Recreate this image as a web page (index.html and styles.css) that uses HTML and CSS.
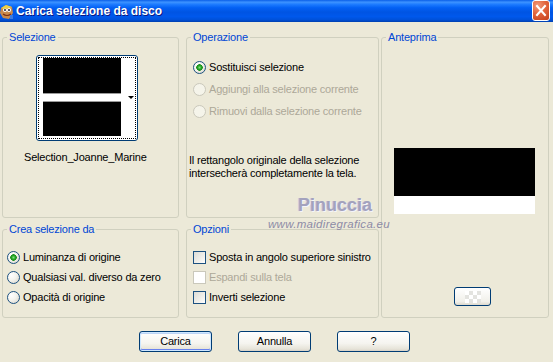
FILE: index.html
```html
<!DOCTYPE html>
<html lang="it">
<head>
    <meta charset="UTF-8">
    <title>Carica selezione da disco</title>
    <link rel="stylesheet" href="styles.css">
</head>
<body>
    <div class="titlebar">
        <svg class="app-icon" width="14" height="16" viewBox="0 0 14 16">
            <path d="M1 4 L6 1 L12 3 L13 9 L9 15 L3 14 L0 9 Z" fill="#c98a4b"/>
            <circle cx="5" cy="6" r="2" fill="#fff"/>
            <circle cx="9" cy="6" r="2" fill="#fff"/>
            <circle cx="5" cy="6" r="1" fill="#223"/>
            <circle cx="9" cy="6" r="1" fill="#223"/>
            <path d="M3 10 Q7 13 11 10" stroke="#7a2d12" stroke-width="1.2" fill="none"/>
            <path d="M1 4 L6 1 L12 3 L9 4 L4 5 Z" fill="#e9d04b"/>
            <rect x="10" y="11" width="3" height="4" fill="#3b7be0"/>
        </svg>
        <span class="title-text">Carica selezione da disco</span>
        <span class="close-btn">
            <svg width="16" height="19" viewBox="0 0 16 19">
                <path d="M4 5 L12 14 M12 5 L4 14" stroke="#fff" stroke-width="2" stroke-linecap="square"/>
            </svg>
        </span>
    </div>

    <div class="panels">
        <fieldset class="group group-sel">
            <legend>Selezione</legend>
            <div class="sel-body">
                <div class="thumb-btn">
                    <div class="thumb-focus">
                        <div class="thumb-img">
                            <div class="blk blk-top"></div>
                            <div class="band"></div>
                            <div class="blk blk-bot"></div>
                        </div>
                        <span class="thumb-arrow"></span>
                    </div>
                </div>
                <div class="sel-name">Selection_Joanne_Marine</div>
            </div>
        </fieldset>

        <fieldset class="group group-op">
            <legend>Operazione</legend>
            <div class="opt-list op-list">
                <div class="opt-row"><span class="radio checked"></span>Sostituisci selezione</div>
                <div class="opt-row disabled"><span class="radio"></span>Aggiungi alla selezione corrente</div>
                <div class="opt-row disabled"><span class="radio"></span>Rimuovi dalla selezione corrente</div>
            </div>
            <p class="op-note">Il rettangolo originale della selezione<br>intersecherà completamente la tela.</p>
        </fieldset>

        <fieldset class="group group-preview">
            <legend>Anteprima</legend>
            <div class="preview">
                <div class="preview-black"></div>
                <div class="preview-white"></div>
            </div>
            <span class="bg-btn"><span class="checker"></span></span>
        </fieldset>

        <fieldset class="group group-src">
            <legend>Crea selezione da</legend>
            <div class="opt-list src-list">
                <div class="opt-row"><span class="radio checked"></span>Luminanza di origine</div>
                <div class="opt-row"><span class="radio"></span>Qualsiasi val. diverso da zero</div>
                <div class="opt-row"><span class="radio"></span>Opacità di origine</div>
            </div>
        </fieldset>

        <fieldset class="group group-opt">
            <legend>Opzioni</legend>
            <div class="opt-list chk-list">
                <div class="opt-row"><span class="check"></span>Sposta in angolo superiore sinistro</div>
                <div class="opt-row disabled"><span class="check"></span>Espandi sulla tela</div>
                <div class="opt-row"><span class="check"></span>Inverti selezione</div>
            </div>
        </fieldset>
    </div>

    <div class="actions">
        <button class="btn btn-default">Carica</button>
        <button class="btn">Annulla</button>
        <button class="btn">?</button>
    </div>

    <div class="watermark">
        <span class="wm-name">Pinuccia</span>
        <span class="wm-site">www.maidiregrafica.eu</span>
    </div>
</body>
</html>
```

FILE: styles.css
```css
* {
    box-sizing: border-box;
}

body {
    margin: 0;
    width: 553px;
    height: 362px;
    overflow: hidden;
    position: relative;
    background-color: #ece9d8;
    font-family: 'Liberation Sans', Arial, sans-serif;
    font-size: 11px;
    line-height: 13px;
    letter-spacing: -0.2px;
    color: #000;
}

/* Title bar */
.titlebar {
    height: 22px;
    display: flex;
    align-items: center;
    background: linear-gradient(to bottom, #0a5fe8 0%, #3d93ff 10%, #1d7bff 20%, #0361f4 35%, #0054e3 55%, #0058ec 75%, #0050d8 90%, #003fae 100%);
}

.app-icon {
    flex: none;
    margin: 1px 0 0 0;
}

.title-text {
    margin-left: 2px;
    color: #fff;
    font-weight: bold;
    font-size: 12px;
    letter-spacing: 0;
    text-shadow: 1px 1px 0 #0a1883;
}

.close-btn {
    margin-left: auto;
    margin-right: 3px;
    align-self: flex-start;
    width: 18px;
    height: 21px;
    display: flex;
    align-items: center;
    justify-content: center;
    border: 1px solid #fff;
    border-radius: 3px;
    background: radial-gradient(circle at 30% 25%, #f09a7c 0%, #e2643c 45%, #c4401b 100%);
}

/* Group boxes */
.panels {
    display: grid;
    grid-template-columns: 184px 195px 168px;
    grid-template-rows: 187px 95px;
    row-gap: 5px;
    padding: 9px 0 0 2px;
}

.group {
    margin: 0;
    padding: 0;
    min-width: 0;
    border: 1px solid #d0d0bf;
    border-radius: 3px;
}

.group legend {
    margin-left: 4px;
    padding: 0 2px;
    color: #0046d5;
    line-height: 13px;
}

.group-sel,
.group-src {
    width: 177px;
}

.group-op,
.group-opt {
    width: 193px;
}

.group-preview {
    grid-column: 3;
    grid-row: 1 / span 2;
}

/* Selezione */
.sel-body {
    display: inline-flex;
    flex-direction: column;
    align-items: center;
    margin: 11px 0 0 21px;
}

.thumb-btn {
    width: 102px;
    height: 86px;
    margin-left: 3px;
    padding: 1px;
    display: flex;
    border: 1px solid #003c74;
    border-radius: 3px;
    background: #fff;
}

.thumb-focus {
    flex: 1;
    display: flex;
    padding-left: 4px;
    border: 1px dotted #000;
}

.thumb-img {
    width: 78px;
    display: flex;
    flex-direction: column;
}

.blk {
    background: #000;
}

.blk-top {
    height: 35px;
}

.blk-bot {
    height: 34px;
}

.band {
    height: 9px;
    border-top: 1px solid #9a9a9a;
    border-bottom: 1px solid #9a9a9a;
    background: #fff;
}

.thumb-arrow {
    margin: 38px 1px 0 auto;
    width: 0;
    height: 0;
    border-left: 3px solid transparent;
    border-right: 3px solid transparent;
    border-top: 3px solid #000;
}

.sel-name {
    margin-top: 10px;
}

/* Radio and check lists */
.opt-list {
    display: flex;
    flex-direction: column;
}

.op-list {
    padding: 12px 0 0 6px;
}

.op-list .opt-row {
    height: 22px;
}

.src-list {
    padding: 11px 0 0 4px;
}

.chk-list {
    padding: 11px 0 0 6px;
}

.src-list .opt-row,
.chk-list .opt-row {
    height: 20px;
}

.opt-row {
    display: flex;
    align-items: center;
    gap: 3px;
    white-space: nowrap;
}

.opt-row.disabled {
    color: #aca899;
}

.radio {
    flex: none;
    width: 13px;
    height: 13px;
    border-radius: 50%;
    border: 1px solid #1c5180;
    background: radial-gradient(circle at 30% 30%, #ffffff 0%, #f4f3ee 45%, #d6d3c6 100%);
}

.radio.checked {
    background: radial-gradient(circle at 50% 50%, #7ee07e 0px, #21a121 2px, #1e8f1e 3px, transparent 3.5px),
                radial-gradient(circle at 30% 30%, #ffffff 0%, #f4f3ee 45%, #d6d3c6 100%);
}

.disabled .radio {
    border-color: #cac8bb;
    background: #f5f4ea;
}

.check {
    flex: none;
    width: 13px;
    height: 13px;
    border: 1px solid #1c5180;
    background: linear-gradient(135deg, #dcdcd7 0%, #f0efea 60%, #ffffff 100%);
}

.disabled .check {
    border-color: #cac8bb;
    background: #fff;
}

.op-note {
    margin: 32px 0 0 2px;
}

/* Anteprima */
.preview {
    width: 141px;
    margin: 104px 0 0 12px;
}

.preview-black {
    height: 48px;
    background: #000;
}

.preview-white {
    height: 18px;
    background: #fff;
}

.bg-btn {
    margin: 73px 0 0 72px;
    width: 37px;
    height: 19px;
    display: flex;
    align-items: center;
    justify-content: center;
    border: 1px solid #003c74;
    border-radius: 3px;
    background: linear-gradient(to bottom, #ffffff, #f1f0ea 80%, #dcd8cc);
}

.checker {
    width: 16px;
    height: 12px;
    background: repeating-conic-gradient(#e3e3df 0 25%, #ffffff 0 50%) 0 0 / 8px 8px;
}

/* Buttons */
.actions {
    display: flex;
    gap: 26px;
    padding: 13px 0 0 139px;
}

.btn {
    width: 73px;
    height: 21px;
    padding: 0;
    font: inherit;
    letter-spacing: inherit;
    color: #000;
    border: 1px solid #003c74;
    border-radius: 3px;
    background: linear-gradient(to bottom, #ffffff 0%, #f5f4ef 60%, #e6e3d8 90%, #d6d0c5 100%);
}

.btn-default {
    box-shadow: inset 0 0 0 1px #cee7ff, inset 0 -1px 0 1px #6982ee, inset 0 1px 0 1px #bcd4f6;
}

/* Watermark over the dialog */
.watermark {
    position: absolute;
    left: 268px;
    top: 195px;
    display: flex;
    flex-direction: column;
    align-items: flex-end;
    width: 122px;
    pointer-events: none;
}

.wm-name {
    margin-right: 18px;
    font-weight: bold;
    font-size: 18px;
    line-height: 21px;
    letter-spacing: 0;
    color: #a3a2bd;
    text-shadow: 1px 1px 0 #f4f4fa, -1px 0 0 #c9c8da;
}

.wm-site {
    margin-top: 2px;
    font-style: italic;
    font-size: 11.5px;
    line-height: 12px;
    letter-spacing: 0.3px;
    color: #8d8ba6;
}
```
